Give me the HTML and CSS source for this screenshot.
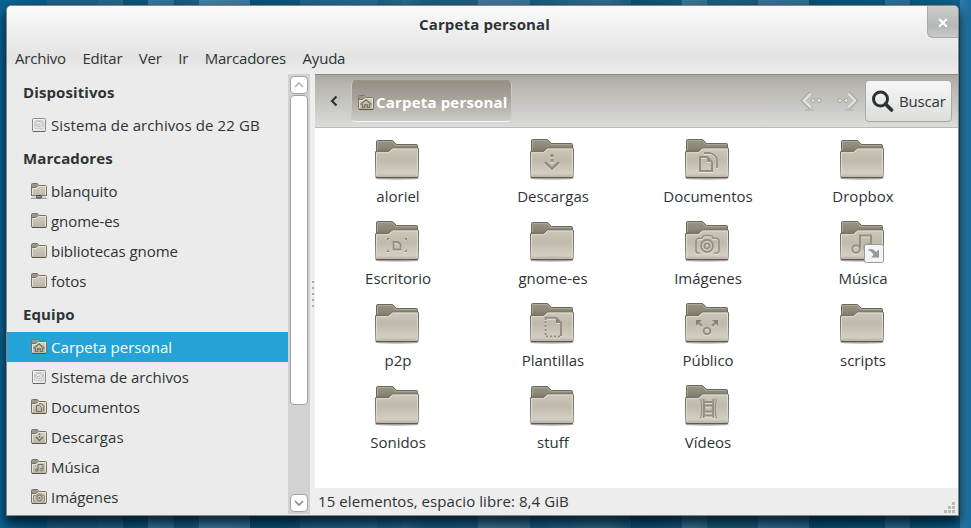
FILE: index.html
```html
<!DOCTYPE html>
<html lang="es">
<head>
<meta charset="utf-8">
<title>Carpeta personal</title>
<link rel="stylesheet" href="styles.css">
</head>
<body>
<svg class="defs" width="0" height="0">
  <defs>
    <linearGradient id="front" x1="0" y1="0" x2="0" y2="1">
      <stop offset="0" stop-color="#cbc7ba"/><stop offset=".4" stop-color="#bfbaab"/><stop offset=".85" stop-color="#d2cec3"/><stop offset="1" stop-color="#b7ad9f"/>
    </linearGradient>
    <linearGradient id="back" x1="0" y1="0" x2="0" y2="1">
      <stop offset="0" stop-color="#9a9685"/><stop offset=".6" stop-color="#8a8675"/><stop offset="1" stop-color="#757161"/>
    </linearGradient>
    <linearGradient id="smallfront" x1="0" y1="0" x2="0" y2="1">
      <stop offset="0" stop-color="#d6d2c6"/><stop offset="1" stop-color="#b9b4a5"/>
    </linearGradient>
    <linearGradient id="disk" x1="0" y1="0" x2="1" y2="1">
      <stop offset="0" stop-color="#ffffff"/><stop offset="1" stop-color="#dcdcdc"/>
    </linearGradient>
  </defs>
  <symbol id="front-panel" viewBox="0 0 48 48">
    <path d="M3 41.700Q2.500 30 2.500 15.700H14.500q1 0 1.600-.7l2.300-2.300q.6-.7 1.600-.7H44.500q1 0 1 1Q45.500 30 45 40.700q0 1-1 1z" fill="url(#front)" stroke="#716d62"/>
    <path d="M3.800 40Q3.500 30 3.500 16.700H15q1 0 1.700-.8l2.200-2.200q.6-.7 1.500-.7H44.500Q44.500 30 44.200 40" fill="none" stroke="#e3e0d8" stroke-width=".9"/>
    <path d="M3.500 41.700H44.500" stroke="#5c5244"/>
  </symbol>
  <symbol id="folder" viewBox="0 0 48 48">
    <ellipse cx="24" cy="42.500" rx="22" ry="1.400" fill="#000" opacity=".22"/>
    <path d="M3.500 17V5.500q0-1 1-1H19q.8 0 1.300.6L23.500 8.500H43.500q1 0 1 1V17z" fill="url(#back)" stroke="#6b685c"/>
    <path d="M4.500 14V5.500H19l3.500 4H43.500" fill="none" stroke="#b0ac9d" stroke-width=".8"/>
    <use href="#front-panel"/>
  </symbol>
  <symbol id="folder-x" viewBox="0 0 48 48">
    <ellipse cx="24" cy="42.500" rx="22" ry="1.400" fill="#000" opacity=".22"/>
    <path d="M3.500 17V4.500q0-1 1-1H19q.8 0 1.300.6L23.500 7.500H43.500q1 0 1 1V17z" fill="url(#back)" stroke="#6b685c"/>
    <path d="M4.500 14V4.500H19l3.500 4H43.500" fill="none" stroke="#b0ac9d" stroke-width=".8"/>
    <use href="#front-panel"/>
  </symbol>
  <symbol id="s-folder" viewBox="0 0 16 16">
    <path d="M.5 13.500V1.500q0-1 1-1H6q.6 0 1 .6L8 2.500H14.500q1 0 1 1V13.500q0 1-1 1H1.500q-1 0-1-1z" fill="url(#smallfront)" stroke="#787361"/>
    <path d="M1 1H6.200L7.200 2.500 4.800 4.500H1z" fill="#9b9786"/>
    <path d="M1 4.500H4.500q.5 0 1-.5L7 2.800" fill="none" stroke="#787361"/>
    <path d="M1.500 13V5.500H5L7.500 3.500H14.500V13" fill="none" stroke="#eceae3" stroke-width=".8"/>
    <path d="M1 14.500H15" stroke="#5c5648"/>
  </symbol>
  <symbol id="s-disk" viewBox="0 0 16 16">
    <rect x="1.500" y="1.500" width="13" height="13" rx="1" fill="url(#disk)" stroke="#8a8a8a"/>
    <path d="M2 14.500H14" stroke="#666"/>
    <rect x="3.500" y="3.500" width="9" height="8" rx="1" fill="#e2e2e2" stroke="#c2c2c2" stroke-width=".7"/>
    <ellipse cx="8" cy="7" rx="3.600" ry="2.600" fill="#eee" stroke="#b5b5b5" stroke-width=".9"/><path d="M6 7.800l3.500-1" stroke="#b0b0b0"/>
  </symbol>
  <symbol id="s-home" viewBox="0 0 16 16"><use href="#s-folder"/><path d="M2.500 9.500L8 4.700l5.500 4.800M4.500 9v3.500h2.200V9.800h2.600v2.700h2.200V9" fill="none" stroke="#77725f" stroke-width="1.200"/></symbol>
  <symbol id="s-net" viewBox="0 0 16 16"><use href="#s-folder"/><path d="M0 14.500H16" stroke="#eee" stroke-width="3"/><path d="M0 15.300H16" stroke="#888"/><path d="M1 12.700H15" stroke="#77725f"/><rect x="5.500" y="12.500" width="5" height="2.500" rx=".8" fill="#999" stroke="#444"/></symbol>
  <symbol id="s-docs" viewBox="0 0 16 16"><use href="#s-folder"/><path d="M5.500 6.500h3l2 2v4h-5zM8 4.700h2.500l2.300 2.300v5" fill="none" stroke="#77725f"/></symbol>
  <symbol id="s-down" viewBox="0 0 16 16"><use href="#s-folder"/><path d="M8.500 4.500v1.500M8.500 7v1.500" stroke="#77725f" stroke-width="1.500"/><path d="M5 8l3.500 3.500L12 8" fill="none" stroke="#77725f" stroke-width="1.400"/></symbol>
  <symbol id="s-music" viewBox="0 0 16 16"><use href="#s-folder"/><path d="M7 11V5.500h5V10" fill="none" stroke="#77725f"/><circle cx="5.800" cy="11" r="1.300" fill="none" stroke="#77725f"/><circle cx="10.800" cy="10.500" r="1.300" fill="none" stroke="#77725f"/></symbol>
  <symbol id="s-camera" viewBox="0 0 16 16"><use href="#s-folder"/><path d="M4 12.500H3.500q-1 0-1-1V7.500q0-1 1-1h2l1-1.500h4l1 1.500h1q1 0 1 1v4q0 1-1 1" fill="none" stroke="#8b8675"/><circle cx="8.500" cy="9" r="2.800" fill="none" stroke="#77725f"/><circle cx="8.500" cy="9" r="1" fill="#77725f"/></symbol>

  <symbol id="e-down" viewBox="0 0 48 48"><path d="M24 18v3M24 23v3" stroke-width="3"/><path d="M17 26l7 6.800L31 26" stroke-width="2.600"/></symbol>
  <symbol id="e-docs" viewBox="0 0 48 48"><path d="M17 21h7l5 5v9H17z" stroke-width="2"/><path d="M24 21v5h5z" fill="#938f81" stroke="none"/><path d="M21 17h6q6.500 2 7 7v8" stroke-width="1.800"/></symbol>
  <symbol id="e-desk" viewBox="0 0 48 48"><path d="M20.500 24h4.500l2.500 2.500V31.500h-7z" stroke-width="2"/><path d="M14 20h3l-3 3zM34 20v3l-3-3zM14 34v-3l3 3zM34 34h-3l3-3z" fill="#8e8a7c" stroke="none"/></symbol>
  <symbol id="e-camera" viewBox="0 0 48 48"><path d="M17 35h-2.500q-1.500-.5-1.500-2.500V23q0-2 2-2.500l4-.5q1-2.500 3-2.500h5q2 0 3 2.500l4 .5q2 .5 2 2.500v9.500q0 2-1.500 2.500H31" stroke-width="1.700"/><circle cx="24" cy="28" r="6" stroke-width="1.800"/><circle cx="24" cy="28" r="2.600" stroke-width="1.800"/></symbol>
  <symbol id="e-music" viewBox="0 0 48 48"><path d="M22 30V17.500h11V29" stroke-width="2"/><circle cx="18" cy="31" r="3.800" stroke-width="2"/><circle cx="30" cy="30" r="3.800" stroke-width="2"/></symbol>
  <symbol id="e-template" viewBox="0 0 48 48"><path d="M17.500 20V17.700H28l5 5V36" stroke-width="2"/><path d="M28 18v5h5z" fill="#858173" stroke="none"/><path d="M17.500 21v15.500H33" stroke-width="2" stroke-dasharray="2.200 1.800"/></symbol>
  <symbol id="e-public" viewBox="0 0 48 48"><circle cx="24" cy="31" r="3.300" stroke-width="2"/><path d="M19 26l-5-4.500M29 26l5-4.500" stroke-width="2.500"/><path d="M13 20h6l-6 6zM35 20h-6l6 6z" fill="#858173" stroke="none"/></symbol>
  <symbol id="e-video" viewBox="0 0 48 48"><path d="M17.500 17q2.500 10 0 19.500M33.500 17q-2.500 10 0 19.500" stroke-width="1.200"/><path d="M20.500 17q1.500 10 0 19M30.500 17q-1.500 10 0 19M21 20h9M21 33.500h9" stroke-width="1.900"/><rect x="21" y="23.500" width="9" height="6" stroke-width="2.200"/></symbol>
</svg>

<div class="window">
  <header class="titlebar">
    <h1 class="title">Carpeta personal</h1>
    <button class="close" aria-label="Cerrar"><svg width="10" height="10" viewBox="0 0 10 10"><path d="M1.500 2.500l7 7M8.500 2.500l-7 7" stroke="#8d8f8e" stroke-width="2"/><path d="M1.200 1.200l7.600 7.600M8.800 1.200L1.200 8.800" stroke="#fff" stroke-width="2.400"/></svg></button>
  </header>
  <nav class="menubar">
    <span>Archivo</span><span>Editar</span><span>Ver</span><span>Ir</span><span>Marcadores</span><span>Ayuda</span>
  </nav>
  <div class="body">
    <aside class="sidebar">
      <h2>Dispositivos</h2>
      <div class="place wide"><svg><use href="#s-disk"/></svg><span>Sistema de archivos de 22 GB</span></div>
      <h2>Marcadores</h2>
      <div class="place"><svg><use href="#s-net"/></svg><span>blanquito</span></div>
      <div class="place"><svg><use href="#s-folder"/></svg><span>gnome-es</span></div>
      <div class="place"><svg><use href="#s-folder"/></svg><span>bibliotecas gnome</span></div>
      <div class="place"><svg><use href="#s-folder"/></svg><span>fotos</span></div>
      <h2>Equipo</h2>
      <div class="place selected"><svg><use href="#s-home"/></svg><span>Carpeta personal</span></div>
      <div class="place"><svg><use href="#s-disk"/></svg><span>Sistema de archivos</span></div>
      <div class="place"><svg><use href="#s-docs"/></svg><span>Documentos</span></div>
      <div class="place wide"><svg><use href="#s-down"/></svg><span>Descargas</span></div>
      <div class="place"><svg><use href="#s-music"/></svg><span>Música</span></div>
      <div class="place"><svg><use href="#s-camera"/></svg><span>Imágenes</span></div>
    </aside>
    <div class="scrollbar">
      <div class="step"><svg width="10" height="6" viewBox="0 0 10 6"><path d="M1 5l4-4 4 4" fill="none" stroke="#b5b5b5" stroke-width="1.700"/></svg></div>
      <div class="thumb"></div>
      <div class="step"><svg width="10" height="6" viewBox="0 0 10 6"><path d="M1 1l4 4 4-4" fill="none" stroke="#8b8b8b" stroke-width="1.700"/></svg></div>
    </div>
    <div class="grip"><i></i><i></i><i></i><i></i><i></i></div>
    <main class="content">
      <div class="toolbar">
        <svg class="back" width="8" height="12" viewBox="0 0 8 12"><path d="M6.500 1.500L2 6l4.500 4.500" fill="none" stroke="#2e3436" stroke-width="2.200"/></svg>
        <div class="crumb"><svg><use href="#s-home"/></svg><span>Carpeta personal</span></div>
        <svg class="nav" width="22" height="22" viewBox="0 0 22 22"><path d="M5 20H14" stroke="#999" opacity=".6"/><path d="M11 3L3.500 10.500l7.500 7.500" fill="none" stroke="#a6a5a1" stroke-width="4.500"/><path d="M11 3.500L4 10.500l7 7" fill="none" stroke="#dfdfdd" stroke-width="2.800"/><g fill="#e0e0de" stroke="#a3a29e" stroke-width=".9"><circle cx="13" cy="10.500" r="2"/><circle cx="19" cy="10.500" r="2"/></g></svg>
        <svg class="nav fwd" width="22" height="22" viewBox="0 0 22 22"><path d="M8 20H17" stroke="#999" opacity=".6"/><path d="M11 3l7.500 7.500L11 18" fill="none" stroke="#a6a5a1" stroke-width="4.500"/><path d="M11 3.500l7 7-7 7" fill="none" stroke="#dfdfdd" stroke-width="2.800"/><g fill="#e0e0de" stroke="#a3a29e" stroke-width=".9"><circle cx="3" cy="10.500" r="2"/><circle cx="9" cy="10.500" r="2"/></g></svg>
        <button class="search"><svg width="23" height="23" viewBox="0 0 23 23"><circle cx="9.500" cy="9" r="7" fill="none" stroke="#2a3234" stroke-width="3"/><path d="M14.500 14l6 6" stroke="#2a3234" stroke-width="3.600" stroke-linecap="round"/></svg><span>Buscar</span></button>
      </div>
      <div class="icons">
        <div class="item"><svg><use href="#folder"/></svg><span>aloriel</span></div>
        <div class="item"><svg><use href="#folder-x"/><use class="emblem" href="#e-down"/></svg><span>Descargas</span></div>
        <div class="item"><svg><use href="#folder-x"/><use class="emblem" href="#e-docs"/></svg><span>Documentos</span></div>
        <div class="item"><svg><use href="#folder"/></svg><span>Dropbox</span></div>
        <div class="item"><svg><use href="#folder-x"/><use class="emblem" href="#e-desk"/></svg><span>Escritorio</span></div>
        <div class="item"><svg><use href="#folder"/></svg><span>gnome-es</span></div>
        <div class="item"><svg><use href="#folder-x"/><use class="emblem" href="#e-camera"/></svg><span>Imágenes</span></div>
        <div class="item"><svg><use href="#folder-x"/><use class="emblem" href="#e-music"/><rect x="26.500" y="26.500" width="19" height="18" rx="2" fill="#f4f4f4" stroke="#9a9a9a"/><path d="M29.500 32.500q5-3.500 8.500 1.500l3-2.500v8h-8l2.500-2.500q-2-4.500-6-4.500z" fill="#989898"/></svg><span>Música</span></div>
        <div class="item"><svg><use href="#folder"/></svg><span>p2p</span></div>
        <div class="item"><svg><use href="#folder-x"/><use class="emblem" href="#e-template"/></svg><span>Plantillas</span></div>
        <div class="item"><svg><use href="#folder-x"/><use class="emblem" href="#e-public"/></svg><span>Público</span></div>
        <div class="item"><svg><use href="#folder"/></svg><span>scripts</span></div>
        <div class="item"><svg><use href="#folder"/></svg><span>Sonidos</span></div>
        <div class="item"><svg><use href="#folder"/></svg><span>stuff</span></div>
        <div class="item"><svg><use href="#folder-x"/><use class="emblem" href="#e-video"/></svg><span>Vídeos</span></div>
      </div>
      <footer class="status"><span>15 elementos, espacio libre: 8,4 GiB</span>
        <svg width="12" height="12" viewBox="0 0 12 12" fill="#bcbcb6"><path d="M8 1h3v3H8zM4 5h3v3H4zM8 5h3v3H8zM0 9h3v3H0zM4 9h3v3H4zM8 9h3v3H8z"/></svg>
      </footer>
    </main>
  </div>
</div>
</body>
</html>
```
FILE: styles.css
```css
* { box-sizing: border-box; }
body {
  margin: 0;
  width: 971px;
  height: 528px;
  overflow: hidden;
  padding: 5px 12px 12px 6px;
  font: 15px/20px "Open Sans", "Noto Sans", sans-serif;
  color: #2e3436;
  background:
    linear-gradient(90deg, #0a6494 0, #075a86 47px, #1b6289 47px, #1d6186 98px, #266690 98px, #256589 123px, #0a5379 123px, #0f587c 148px, #36799f 148px, #2f7196 174px, #145a7e 174px, #1b6086 199px, #4280a6 199px, #3c799f 250px, #085177 250px, #0b567c 300px, #216187 300px, #286990 377px, #1d5f85 377px, #256489 402px, #2b6a8f 402px, #1b5c81 427px, #205f84 478px, #42789c 478px, #3a7196 530px, #155b80 530px, #2a678a 580px, #2e6b8f 606px, #1f5d80 631px, #0d5074 631px, #18597d 682px, #3b789b 682px, #34718f 707px, #1d5f80 707px, #1b5a7d 758px, #36729a 758px, #2f6e93 809px, #065174 809px, #0a587f 885px, #2d7199 885px, #2b6d95 910px, #08587f 910px, #0c618b 960px, #2e7dab 960px, #1a6ea0 971px);
}
.defs { position: absolute; }
h1, h2 { margin: 0; font-size: 15px; line-height: 20px; font-weight: 700; }
svg { flex: none; display: block; }
.window {
  height: 511px;
  border: 1px solid #8a8682;
  border-radius: 5px 5px 0 0;
  display: flex;
  flex-direction: column;
  box-shadow: 0 7px 12px 1px rgba(0, 15, 25, .8);
  background: linear-gradient(#fafafa 0, #e3e3e3 52px, #ececec 66px);
}
.titlebar { height: 38px; display: grid; grid-template-columns: 1fr; position: relative; }
.title { text-align: center; padding: 8px 0 0 4px; letter-spacing: .15px; }
.close {
  position: absolute; right: 0; top: 0;
  width: 31px; height: 32px;
  border: 1px solid #a9aaa9; border-width: 0 0 1px 1px;
  border-radius: 0 4px 0 6px;
  background: linear-gradient(#cccecd, #b4b7b6 65%, #c9cbca);
  padding: 2px 0 0; display: flex; align-items: center; justify-content: center;
}
.menubar { height: 30px; padding: 4px 0 0 8px; display: flex; gap: 16.5px; letter-spacing: -.2px; }
.body { flex: 1; min-height: 0; display: flex; }
.sidebar { width: 281px; background: #ebebeb; overflow: hidden; }
.sidebar h2 { height: 36px; padding: 8px 0 0 16px; letter-spacing: .1px; }
.place { height: 30px; display: flex; align-items: center; gap: 4px; padding: 0 0 1px 24px; letter-spacing: -.05px; }
.place svg { margin-top: 1px; }
.wide { letter-spacing: .1px; }
.place svg, .crumb svg { width: 16px; height: 16px; }
.selected { background: #25a2d6; color: #fff; letter-spacing: .05px; }
.scrollbar { width: 22px; height: 440px; background: #d2d2d2; padding: 2px; display: flex; flex-direction: column; }
.step { height: 18px; width: 18px; border: 1px solid #a3a3a3; border-radius: 4px; background: #fff; display: flex; align-items: center; justify-content: center; }
.thumb { height: 310px; width: 18px; margin: 1px 0 89px; border: 1px solid #a3a3a3; border-radius: 4px; background: #fff; }
.grip { width: 5px; display: flex; flex-direction: column; align-items: center; justify-content: center; gap: 4px; background: #eee; padding-bottom: 2px; }
.grip i { width: 2px; height: 2px; background: #aaa; }
.content { flex: 1; display: flex; flex-direction: column; min-width: 0; }
.toolbar {
  height: 54px; display: flex; align-items: center; padding: 0 6px 0 15px;
  border-top: 1px solid #8a8a88; border-bottom: 1px solid #b9b9b6;
  background: linear-gradient(#aaa6a0, #b9b6b0 18%, #c4c3bf 50%, #dcdcdb);
}
.crumb {
  margin-left: 13px; width: 161px; height: 42px; display: flex; align-items: center; gap: 2px; padding: 2px 0 0 6px;
  color: #fff; font-weight: 700; white-space: nowrap; letter-spacing: .18px;
  border: 1px solid #f0f0ee; border-color: #98948a #c9c8c4 #f5f5f4; border-radius: 5px;
  background: linear-gradient(#938f83, #a7a49a 45%, #cccbc6);
}
.crumb svg { margin-top: 1px; }
.nav { margin-left: auto; }
.fwd { margin-left: 15px; }
.search {
  margin-left: 6px; width: 87px; height: 42px; padding: 0 0 0 5px; display: flex; align-items: center; gap: 5px;
  font: inherit; letter-spacing: -.15px; color: inherit; border: 1px solid #a8aaa6; border-radius: 4px;
  background: linear-gradient(#f7f7f7, #dcdedb);
}
.icons {
  flex: 1; background: #fff; padding: 8px 0 0 5px;
  display: grid; grid-template-columns: repeat(4, 155px); grid-auto-rows: 82px; align-content: start;
}
.item { display: flex; flex-direction: column; align-items: center; text-align: center; padding-left: 1px; }
.item svg { width: 48px; height: 48px; margin-left: -2px; }
.item span { margin-top: 2px; }
.emblem { fill: none; stroke: #938f81; filter: drop-shadow(0 1px 0 rgba(255, 255, 255, .5)); }
.status { height: 27px; background: #ededed; display: flex; padding: 3px 2px 0 3px; justify-content: space-between; letter-spacing: .08px; }
.status svg { margin-top: 10px; }
```
